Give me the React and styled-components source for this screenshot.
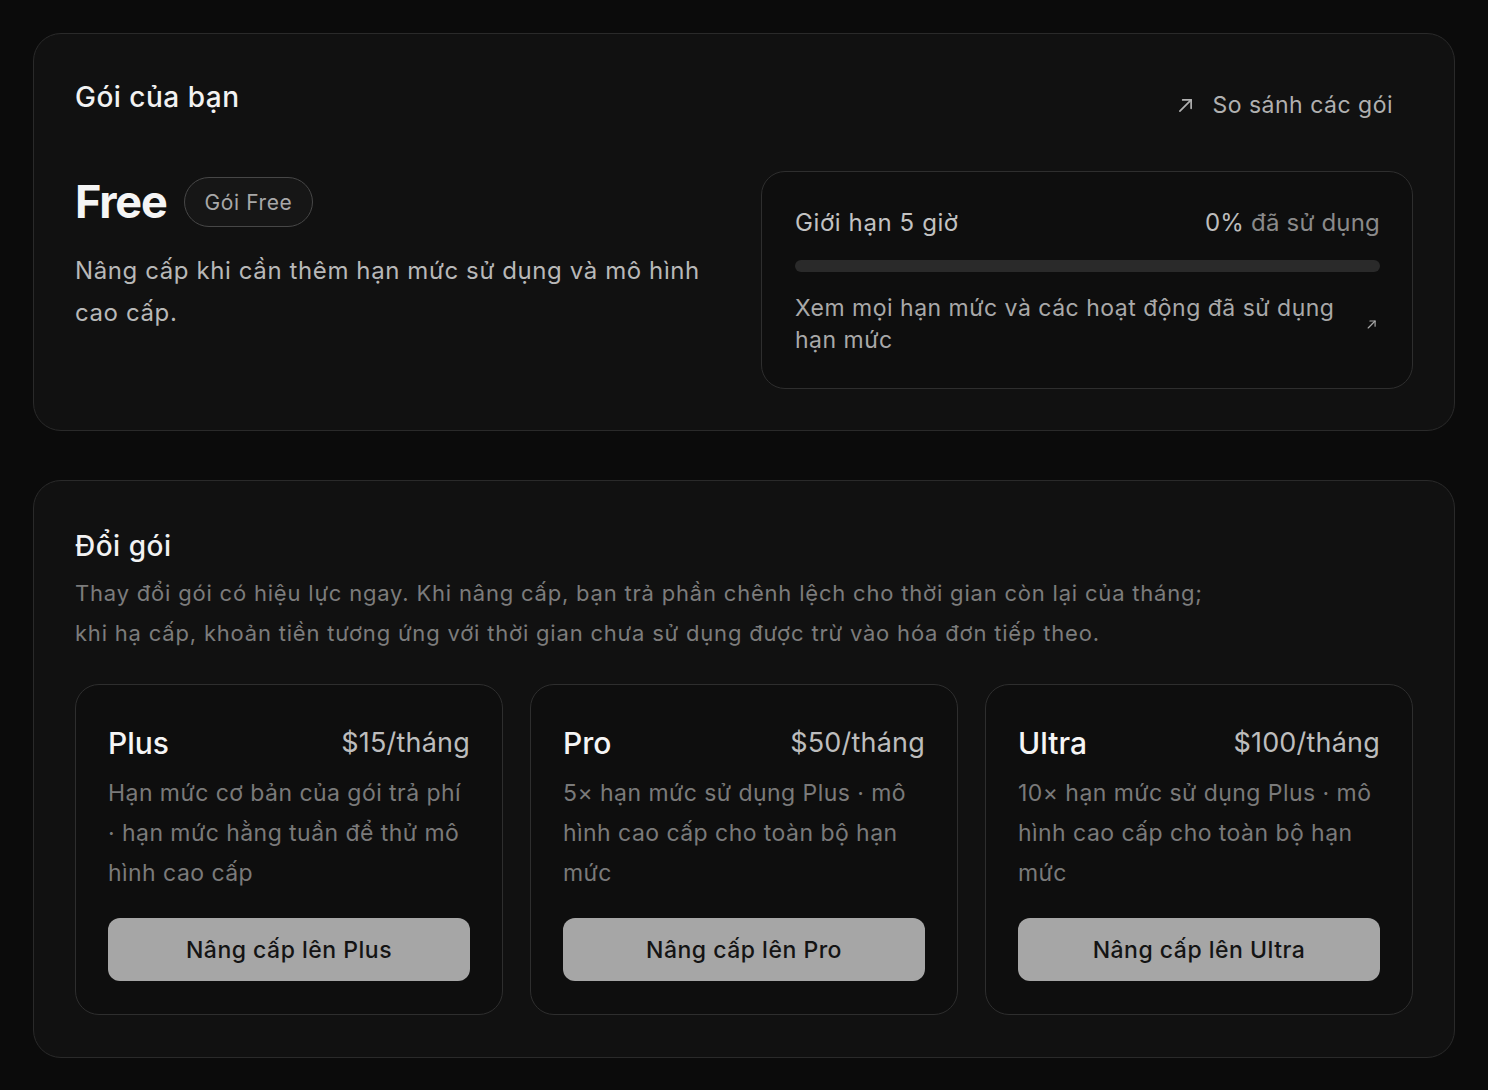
import React from 'react';
import styled, { createGlobalStyle } from 'styled-components';

const GlobalStyle = createGlobalStyle`
  html, body {
    margin: 0;
    padding: 0;
    background: #0b0b0b;
  }
  body {
    font-family: Inter, "Noto Sans", sans-serif;
    -webkit-font-smoothing: antialiased;
  }
`;

// diagonal arrow, drawn edge to edge so the size is the glyph size
const ArrowIcon = ({ size = 16, stroke = 2 }) => (
  <svg width={size} height={size} viewBox="0 0 16 16" fill="none" stroke="currentColor" strokeWidth={stroke} strokeLinecap="round" strokeLinejoin="round">
    <path d="M2 14L14 2" />
    <path d="M5 2h9v9" />
  </svg>
);

const plans = [
  { name: 'Plus', price: '$15/tháng', desc: 'Hạn mức cơ bản của gói trả phí · hạn mức hằng tuần để thử mô hình cao cấp' },
  { name: 'Pro', price: '$50/tháng', desc: '5× hạn mức sử dụng Plus · mô hình cao cấp cho toàn bộ hạn mức' },
  { name: 'Ultra', price: '$100/tháng', desc: '10× hạn mức sử dụng Plus · mô hình cao cấp cho toàn bộ hạn mức' },
];

const App = () => {
  return (
    <Page>
      <GlobalStyle />
      <Card $pad="45px 41px 41px">
        <Header>
          <Title>Gói của bạn</Title>
          <CompareLink>
            <ArrowIcon size={15} stroke={1.8} />
            So sánh các gói
          </CompareLink>
        </Header>
        <Body>
          <Current>
            <PlanRow>
              <PlanName>Free</PlanName>
              <Pill>Gói Free</Pill>
            </PlanRow>
            <Lead>Nâng cấp khi cần thêm hạn mức sử dụng và mô hình cao cấp.</Lead>
          </Current>
          <Usage>
            <UsageHead>
              <span>Giới hạn 5 giờ</span>
              <UsageValue>0% <em>đã sử dụng</em></UsageValue>
            </UsageHead>
            <Track />
            <UsageLink>
              <span>Xem mọi hạn mức và các hoạt động đã sử dụng hạn mức</span>
              <ArrowIcon size={11} stroke={2} />
            </UsageLink>
          </Usage>
        </Body>
      </Card>

      <Card $pad="47px 41px 42px">
        <Title>Đổi gói</Title>
        <Note>
          Thay đổi gói có hiệu lực ngay. Khi nâng cấp, bạn trả phần chênh lệch cho thời gian còn lại của tháng;
          <br />
          khi hạ cấp, khoản tiền tương ứng với thời gian chưa sử dụng được trừ vào hóa đơn tiếp theo.
        </Note>
        <Grid>
          {plans.map((p) => (
            <PlanCard key={p.name}>
              <PlanTop>
                <PlanTitle>{p.name}</PlanTitle>
                <Price>{p.price}</Price>
              </PlanTop>
              <PlanDesc>{p.desc}</PlanDesc>
              <Button>Nâng cấp lên {p.name}</Button>
            </PlanCard>
          ))}
        </Grid>
      </Card>
    </Page>
  );
};

export default App;

const Page = styled.div`
  padding: 33px;
  display: flex;
  flex-direction: column;
  gap: 49px;
`;

const Card = styled.section`
  background: #111111;
  border: 1px solid #2a2a2a;
  border-radius: 28px;
  padding: ${(p) => p.$pad};
`;

const Header = styled.div`
  display: flex;
  justify-content: space-between;
  align-items: flex-start;
  padding-right: 20px;
`;

const Title = styled.h2`
  margin: 0;
  font-size: 28px;
  line-height: 36px;
  font-weight: 500;
  color: #f2f2f2;
  letter-spacing: 0.5px;
`;

const CompareLink = styled.a`
  display: flex;
  align-items: center;
  gap: 19px;
  margin-top: 10px;
  font-size: 23px;
  line-height: 32px;
  letter-spacing: 0.5px;
  color: #b0b0b0;
  cursor: pointer;
`;

const Body = styled.div`
  display: flex;
  justify-content: space-between;
  align-items: flex-start;
  margin-top: 50px;
`;

const Current = styled.div`
  width: 655px;
  padding-top: 6px;
`;

const PlanRow = styled.div`
  display: flex;
  align-items: center;
  gap: 17px;
`;

const PlanName = styled.div`
  font-size: 45px;
  line-height: 50px;
  font-weight: 700;
  color: #f5f5f5;
  letter-spacing: -1.2px;
`;

const Pill = styled.div`
  height: 48px;
  padding: 0 20px;
  display: flex;
  align-items: center;
  border: 1px solid #474747;
  border-radius: 25px;
  background: #161616;
  font-size: 21px;
  color: #a8a8a8;
  letter-spacing: 0.6px;
`;

const Lead = styled.p`
  margin: 23px 0 0;
  font-size: 24px;
  line-height: 42px;
  letter-spacing: 0.6px;
  color: #b8b8b8;
`;

const Usage = styled.div`
  width: 652px;
  box-sizing: border-box;
  border: 1px solid #2e2e2e;
  border-radius: 24px;
  background: #0e0e0e;
  padding: 35px 32px 32px 33px;
`;

const UsageHead = styled.div`
  display: flex;
  justify-content: space-between;
  align-items: center;
  font-size: 24px;
  line-height: 32px;
  letter-spacing: 0.6px;
  color: #c2c2c2;
`;

const UsageValue = styled.span`
  color: #bdbdbd;
  letter-spacing: 0.2px;
  em {
    font-style: normal;
    color: #8a8a8a;
  }
`;

const Track = styled.div`
  margin-top: 21px;
  height: 12px;
  border-radius: 6px;
  background: #2a2a2a;
`;

const UsageLink = styled.div`
  margin-top: 20px;
  display: flex;
  align-items: center;
  justify-content: space-between;
  gap: 30px;
  font-size: 23px;
  line-height: 32px;
  letter-spacing: 0.5px;
  color: #a9a9a9;
  span {
    max-width: 545px;
  }
  svg {
    margin-right: 4px;
  }
`;

const Note = styled.p`
  margin: 9px 0 0;
  font-size: 22px;
  line-height: 40px;
  letter-spacing: 0.8px;
  color: #7c7c7c;
`;

const Grid = styled.div`
  margin-top: 31px;
  display: grid;
  grid-template-columns: repeat(3, 1fr);
  gap: 27px;
`;

const PlanCard = styled.div`
  border: 1px solid #2e2e2e;
  border-radius: 24px;
  background: #0e0e0e;
  padding: 39px 32px 33px 32px;
  display: flex;
  flex-direction: column;
`;

const PlanTop = styled.div`
  display: flex;
  justify-content: space-between;
  align-items: center;
`;

const PlanTitle = styled.div`
  font-size: 30px;
  line-height: 38px;
  font-weight: 500;
  color: #f5f5f5;
`;

const Price = styled.div`
  font-size: 27px;
  line-height: 38px;
  letter-spacing: 0.2px;
  color: #bdbdbd;
`;

const PlanDesc = styled.p`
  margin: 11px 0 0;
  min-height: 120px;
  font-size: 23px;
  line-height: 40px;
  letter-spacing: 0.45px;
  color: #7a7a7a;
`;

const Button = styled.button`
  margin-top: 25px;
  height: 63px;
  border: none;
  border-radius: 12px;
  background: #a6a6a6;
  color: #141414;
  font-family: Inter, "Noto Sans", sans-serif;
  font-size: 23px;
  font-weight: 500;
  letter-spacing: 0.5px;
  cursor: pointer;
`;
